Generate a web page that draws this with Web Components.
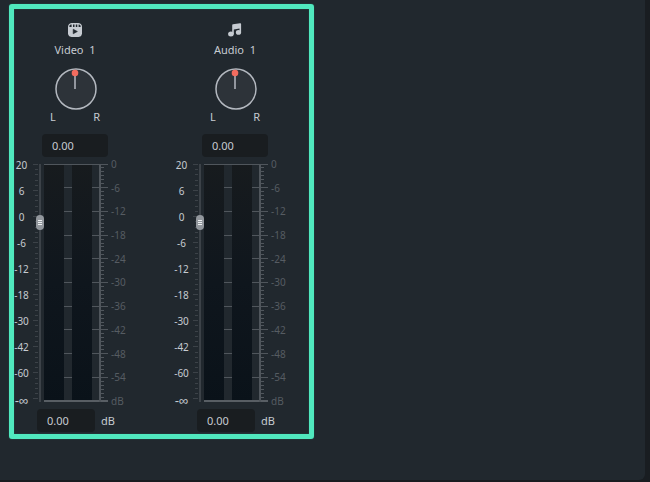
<!DOCTYPE html>
<html lang="en">
<head>
<meta charset="utf-8">
<meta name="viewport" content="width=device-width, initial-scale=1">
<title>Audio mixer</title>
<style>
    html, body {
        height: 100%;
        margin: 0;
    }

    body {
        background: #191d21;
        color: #c6cbd1;
        font-family: 'Noto Sans', 'Open Sans', sans-serif;
        font-size: 11px;
    }
</style>
</head>
<body>
<mixer-panel>
    <mixer-channel name="Video  1" icon="video"></mixer-channel>
    <mixer-channel name="Audio  1" icon="audio"></mixer-channel>
</mixer-panel>

<script>
const ICONS = {
    video: `
        <mask id="m">
            <rect width="14" height="14" rx="3.5" fill="#fff"/>
            <path d="M1.4 4V3a1.6 1.6 0 0 1 1.6-1.6h.6V4zM5 1.4h1.5V4H5zM7.8 1.4h1.5V4H7.8zM10.6 1.4h.4A1.6 1.6 0 0 1 12.6 3v1h-2z" fill="#000"/>
            <path d="M5.2 6.2v4.6l4.2-2.3z" fill="#000" stroke="#000" stroke-width=".6" stroke-linejoin="round"/>
        </mask>
        <rect width="14" height="14" rx="3.5" fill="currentColor" mask="url(#m)"/>`,
    audio: `
        <path fill-rule="evenodd" d="M4.2 2.2a1 1 0 0 1 .8-1L12 .2a.9.9 0 0 1 1.1.9v8.3h-1.6V5.6l-5.7 1v4.8H4.2z" fill="currentColor"/>
        <ellipse cx="2.9" cy="11.1" rx="2.8" ry="2.5" fill="currentColor"/>
        <ellipse cx="10.5" cy="9.4" rx="2.6" ry="2.4" fill="currentColor"/>`
};

/* Panel: holds the highlighted group of channels */
class MixerPanel extends HTMLElement {
    constructor() {
        super();
        this.attachShadow({ mode: 'open' });
    }

    connectedCallback() {
        this.shadowRoot.innerHTML = `
            <style>
                :host {
                    display: block;
                    box-sizing: border-box;
                    height: 100%;
                    padding: 0 5px 2px 0;
                }

                .surface {
                    display: flex;
                    align-items: flex-start;
                    box-sizing: border-box;
                    height: 100%;
                    padding: 4px 9px;
                    background: #21282e;
                    border-radius: 0 0 6px 0;
                }

                .group {
                    display: flex;
                    gap: 38px;
                    padding: 14px 13px 2px 0;
                    border: 5px solid #50e8be;
                    border-radius: 3px;
                    box-shadow: 0 0 1px #2f8f7b, inset 0 0 1px #2f8f7b;
                }
            </style>
            <main class="surface">
                <section class="group" aria-label="Channels"><slot></slot></section>
            </main>
        `;
    }
}

/* Pan knob: a range input under a drawn dial */
class PanKnob extends HTMLElement {
    constructor() {
        super();
        this.attachShadow({ mode: 'open' });
    }

    connectedCallback() {
        this.shadowRoot.innerHTML = `
            <style>
                :host {
                    display: flex;
                    flex-direction: column;
                    align-items: center;
                }

                .dial {
                    display: grid;
                    margin-left: 2px;
                }

                .dial > * {
                    grid-area: 1 / 1;
                    width: 42px;
                    height: 42px;
                    margin: 0;
                }

                input {
                    opacity: 0;
                    cursor: pointer;
                }

                svg {
                    pointer-events: none;
                }

                .sides {
                    display: flex;
                    justify-content: space-between;
                    width: 50px;
                    line-height: 14px;
                }
            </style>
            <div class="dial">
                <input type="range" min="-100" max="100" value="0" aria-label="Pan">
                <svg viewBox="0 0 42 42" aria-hidden="true">
                    <circle cx="21" cy="21" r="20" fill="#2d3339" stroke="#b4b9c0" stroke-width="1.5"/>
                    <path d="M20 6v15" stroke="#b4b9c0" stroke-width="1.5"/>
                    <circle cx="20" cy="5" r="3.3" fill="#f36c5f"/>
                </svg>
            </div>
            <div class="sides"><span>L</span><span>R</span></div>
        `;
    }
}

/* Fader with gain scale, two level bars and level scale */
class LevelStrip extends HTMLElement {
    constructor() {
        super();
        this.attachShadow({ mode: 'open' });
    }

    connectedCallback() {
        const gains = ['20', '6', '0', '-6', '-12', '-18', '-30', '-42', '-60', '-∞'];
        const levels = ['0', '-6', '-12', '-18', '-24', '-30', '-36', '-42', '-48', '-54', 'dB'];

        this.shadowRoot.innerHTML = `
            <style>
                :host {
                    display: flex;
                    font-size: 10px;
                    line-height: 14px;
                }

                ol {
                    display: flex;
                    flex-direction: column;
                    margin: 0;
                    padding: 0;
                    list-style: none;
                }

                .gains {
                    width: 15px;
                    gap: 12px;
                    align-items: center;
                    white-space: nowrap;
                }

                /* the infinity sign is too small in the text font */
                .gains li:last-child {
                    margin-top: 2px;
                    font-family: 'Liberation Sans', sans-serif;
                    font-size: 13px;
                }

                .levels {
                    justify-content: space-between;
                    margin: -1px 0 0 3px;
                    color: #565c62;
                }

                .gain-ticks, .bars {
                    display: block;
                    height: 238px;
                    margin: 6px 0;
                }

                .gain-ticks {
                    width: 5px;
                    margin-left: 4px;
                }

                .bars {
                    width: 64px;
                }

                input {
                    appearance: none;
                    writing-mode: vertical-lr;
                    direction: rtl;
                    width: 8px;
                    height: 238px;
                    margin: 6px 0 6px -2px;
                    background: linear-gradient(#3c4248, #3c4248) center / 2px 100% no-repeat;
                }

                input::-webkit-slider-thumb {
                    appearance: none;
                    box-sizing: border-box;
                    width: 8px;
                    height: 15px;
                    border-radius: 4px;
                    background:
                        linear-gradient(#eceef0 1px, transparent 1px 2px, #eceef0 2px 3px, transparent 3px 4px, #eceef0 4px 5px) center / 4px 5px no-repeat,
                        #92979d;
                }
            </style>
            <ol class="gains">${gains.map(g => `<li>${g}</li>`).join('')}</ol>
            <svg class="gain-ticks" viewBox="0 0 5 238" aria-hidden="true">${this.gainTicks()}</svg>
            <input type="range" min="0" max="100" value="77" aria-label="Gain">
            <svg class="bars" viewBox="0 0 64 238" aria-hidden="true">
                <defs>
                    <linearGradient id="bar" x2="0" y2="1">
                        <stop offset="0" stop-color="#171b1e"/>
                        <stop offset=".5" stop-color="#0f161d"/>
                        <stop offset="1" stop-color="#0a1219"/>
                    </linearGradient>
                </defs>
                <rect x="0" width="20" height="238" fill="url(#bar)"/>
                <rect x="28" width="20" height="238" fill="url(#bar)"/>
                ${this.levelTicks()}
                <path d="M0 .5h64" stroke="#50565c"/>
                <path d="M0 237h64" stroke="#585e64" stroke-width="2"/>
                <path d="M56 0v238" stroke="#50565c" stroke-width="2"/>
            </svg>
            <ol class="levels">${levels.map(l => `<li>${l}</li>`).join('')}</ol>
        `;
    }

    gainTicks() {
        let out = '';
        for (let i = 0; i <= 45; i++) {
            const y = Math.round(i * 237 / 45.5) + 0.5;
            out += `<path d="M${i % 5 ? 2 : 0} ${y}H5" stroke="#3c4248"/>`;
        }
        return out;
    }

    levelTicks() {
        let out = '';
        for (let i = 1; i < 60; i++) {
            const y = Math.floor(i * 237 / 60) + 0.5;
            out += i % 6
                ? `<path d="M57 ${y}h3" stroke="#50565c"/>`
                : `<path d="M20 ${y}h8M48 ${y}h16" stroke="#50565c"/>`;
        }
        return out;
    }
}

class MixerChannel extends HTMLElement {
    constructor() {
        super();
        this.attachShadow({ mode: 'open' });
    }

    connectedCallback() {
        const name = this.getAttribute('name') || '';
        const icon = ICONS[this.getAttribute('icon')] || '';

        this.shadowRoot.innerHTML = `
            <style>
                :host {
                    display: flex;
                    flex-direction: column;
                    align-items: center;
                    width: 122px;
                }

                .icon {
                    width: 14px;
                    height: 14px;
                }

                h2 {
                    margin: 4px 0 9px;
                    font-size: 11px;
                    font-weight: 400;
                    line-height: 18px;
                    white-space: pre;
                }

                input {
                    box-sizing: border-box;
                    height: 23px;
                    padding: 0 10px;
                    border: 0;
                    border-radius: 4px;
                    background: #191d20;
                    color: inherit;
                    font: inherit;
                }

                .pan {
                    width: 66px;
                    margin: 10px 0 1px;
                }

                level-strip {
                    align-self: stretch;
                }

                .output {
                    display: flex;
                    align-items: center;
                    align-self: flex-start;
                    gap: 6px;
                    margin: 1px 0 0 23px;
                }

                .output input {
                    width: 58px;
                }
            </style>
            <svg class="icon" viewBox="0 0 14 14" aria-hidden="true">${icon}</svg>
            <h2>${name}</h2>
            <pan-knob></pan-knob>
            <input class="pan" type="text" value="0.00" aria-label="Pan value">
            <level-strip></level-strip>
            <div class="output">
                <input id="gain" type="text" value="0.00">
                <label for="gain">dB</label>
            </div>
        `;
    }
}

customElements.define('mixer-panel', MixerPanel);
customElements.define('pan-knob', PanKnob);
customElements.define('level-strip', LevelStrip);
customElements.define('mixer-channel', MixerChannel);
</script>
</body>
</html>
